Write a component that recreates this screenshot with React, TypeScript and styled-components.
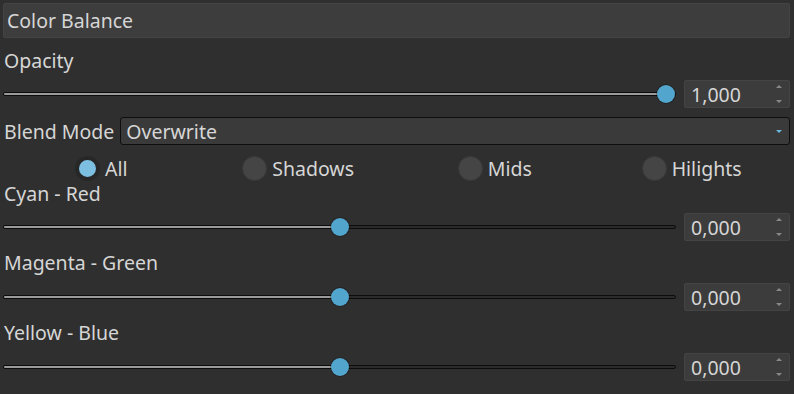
import React, { useState } from 'react'
import styled, { createGlobalStyle } from 'styled-components'

const Global = createGlobalStyle`
  html, body {
    margin: 0;
    background: #2f2f2f;
  }
  body {
    font-family: "Noto Sans", "Open Sans", sans-serif;
    color: #d6d6d6;
    font-size: 19.5px;
  }
`

const Panel = styled.div`
  display: flex;
  flex-direction: column;
  padding: 3px 4px 0 3px;
  width: 794px;
  height: 394px;
  box-sizing: border-box;
`

const Header = styled.div`
  height: 35px;
  box-sizing: border-box;
  background: #3d3d3d;
  border: 1px solid #444;
  border-radius: 2px;
  padding-left: 3px;
  display: flex;
  align-items: center;
  line-height: 1;
`

const Label = styled.div<{ $top: number }>`
  height: 24px;
  line-height: 24px;
  margin-top: ${(p) => p.$top}px;
  padding-left: 1px;
`

const Row = styled.div<{ $top: number }>`
  display: flex;
  align-items: center;
  height: 28px;
  margin-top: ${(p) => p.$top}px;
`

const Track = styled.div`
  position: relative;
  flex: 1;
  height: 4px;
  margin-right: 8px;
  box-sizing: border-box;
  border: 1px solid #0c0c0c;
  border-radius: 2px;
  background: #2b2b2b;
`

const Fill = styled.div`
  position: absolute;
  left: 0;
  top: 0;
  bottom: 0;
  background: #9a9a9a;
  border-radius: 2px 0 0 2px;
`

const Knob = styled.div`
  position: absolute;
  top: 50%;
  width: 18px;
  height: 18px;
  margin: -9px 0 0 -9px;
  border-radius: 50%;
  background: #52a6cd;
  box-shadow: 0 0 0 1px rgba(0, 0, 0, 0.25);
`

const NumBox = styled.div`
  position: relative;
  width: 106px;
  height: 28px;
  box-sizing: border-box;
  background: #3c3c3c;
  border: 1px solid #444;
  border-radius: 2px;
  padding-left: 6px;
  display: flex;
  align-items: center;
`

const Spin = styled.div`
  position: absolute;
  right: 7px;
  top: 4px;
  bottom: 4px;
  display: flex;
  flex-direction: column;
  justify-content: space-between;
`

const Tri = styled.div<{ $down?: boolean; $color?: string }>`
  width: 0;
  height: 0;
  border-left: 3px solid transparent;
  border-right: 3px solid transparent;
  ${(p) =>
    p.$down
      ? `border-top: 3px solid ${p.$color || '#888'};`
      : `border-bottom: 3px solid ${p.$color || '#888'};`}
`

const BlendLabel = styled.span`
  padding-left: 1px;
  margin-right: 6px;
  white-space: nowrap;
`

const Select = styled.div`
  flex: 1;
  height: 28px;
  box-sizing: border-box;
  background: #3a3a3a;
  border: 1px solid #0e0e0e;
  border-radius: 3px;
  padding: 0 7px 0 5px;
  display: flex;
  align-items: center;
  justify-content: space-between;
`

const RadioRow = styled.div`
  display: grid;
  grid-template-columns: repeat(4, 1fr);
  justify-items: center;
  align-items: center;
  height: 26px;
  margin-top: 10px;
`

const RadioItem = styled.label`
  display: flex;
  align-items: center;
  gap: 5px;
  cursor: pointer;
`

const RadioDot = styled.span<{ $on: boolean }>`
  width: 25px;
  height: 25px;
  box-sizing: border-box;
  border-radius: 50%;
  background: ${(p) => (p.$on ? '#7dbfe1' : '#454545')};
  border: ${(p) => (p.$on ? '4px solid #272727' : '1px solid #3a3a3a')};
`

const Slider = ({ value, min, max }: { value: number; min: number; max: number }) => {
  const pct = (value - min) / (max - min)
  const left = `calc(9px + (100% - 18px) * ${pct})`
  return (
    <Track>
      <Fill style={{ width: left }} />
      <Knob style={{ left }} />
    </Track>
  )
}

const Num = ({ v }: { v: string }) => (
  <NumBox>
    {v}
    <Spin>
      <Tri />
      <Tri $down />
    </Spin>
  </NumBox>
)

export default function App() {
  const [range, setRange] = useState('All')
  const ranges = ['All', 'Shadows', 'Mids', 'Hilights']
  return (
    <>
      <Global />
      <Panel>
        <Header>Color Balance</Header>
        <Label $top={11}>Opacity</Label>
        <Row $top={7}>
          <Slider value={1} min={0} max={1} />
          <Num v="1,000" />
        </Row>
        <Row $top={9}>
          <BlendLabel>Blend Mode</BlendLabel>
          <Select>
            Overwrite
            <Tri $down $color="#6ab6dc" />
          </Select>
        </Row>
        <RadioRow>
          {ranges.map((r) => (
            <RadioItem key={r} onClick={() => setRange(r)}>
              <RadioDot $on={range === r} />
              {r}
            </RadioItem>
          ))}
        </RadioRow>
        <Label $top={1}>Cyan - Red</Label>
        <Row $top={7}>
          <Slider value={0} min={-1} max={1} />
          <Num v="0,000" />
        </Row>
        <Label $top={10}>Magenta - Green</Label>
        <Row $top={8}>
          <Slider value={0} min={-1} max={1} />
          <Num v="0,000" />
        </Row>
        <Label $top={10}>Yellow - Blue</Label>
        <Row $top={8}>
          <Slider value={0} min={-1} max={1} />
          <Num v="0,000" />
        </Row>
      </Panel>
    </>
  )
}
